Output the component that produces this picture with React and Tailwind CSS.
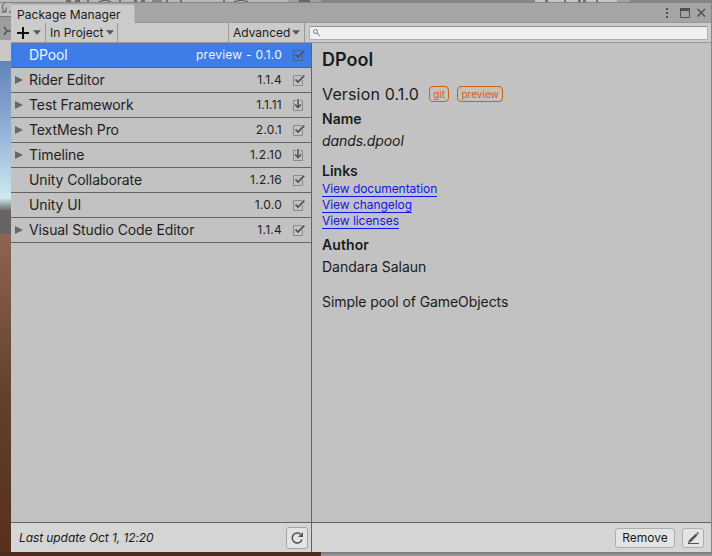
const packages = [
  { name: "DPool", version: "preview - 0.1.0", icon: "check", selected: true },
  { name: "Rider Editor", version: "1.1.4", icon: "check", arrow: true },
  { name: "Test Framework", version: "1.1.11", icon: "down", arrow: true },
  { name: "TextMesh Pro", version: "2.0.1", icon: "check", arrow: true },
  { name: "Timeline", version: "1.2.10", icon: "down", arrow: true },
  { name: "Unity Collaborate", version: "1.2.16", icon: "check" },
  { name: "Unity UI", version: "1.0.0", icon: "check" },
  { name: "Visual Studio Code Editor", version: "1.1.4", icon: "check", arrow: true },
];

function StatusIcon({ kind, selected }) {
  const box = selected ? "#4a5f8c" : "#8a8a8a";
  return (
    <svg className="mr-[6px] ml-[11px] h-3 w-3 shrink-0" viewBox="0 0 12 12" fill="none">
      {kind === "check" ? (
        <>
          <path d="M9 1.500H.5V11.500H9.500V6" stroke={box} />
          <path d="M2.500 5.500L5 8L11.300 1.600" stroke="#505050" strokeWidth="1.700" />
        </>
      ) : (
        <>
          <path d="M3 1.500H.5V11.500H9.500V1.500H7" stroke={box} />
          <path d="M5 0V8.500M2 5.500L5 8.500L8 5.500" stroke="#555" strokeWidth="1.600" />
        </>
      )}
    </svg>
  );
}

function Caret() {
  return (
    <svg className="h-[5px] w-2 shrink-0" viewBox="0 0 8 5">
      <path d="M0 .3H8L4 4.700Z" fill="#555" />
    </svg>
  );
}

function Row({ item }) {
  return (
    <div
      className={
        "flex h-[25px] shrink-0 items-center border-b border-[#636363] " +
        (item.selected ? "bg-[#3e7de7] text-[#eef3fc]" : "text-[#1f1f1f]")
      }
    >
      <div className="flex w-[18px] shrink-0 pl-1">
        {item.arrow && (
          <svg className="h-2 w-2" viewBox="0 0 8 8">
            <path d="M0 0L8 4L0 8Z" fill="#666" />
          </svg>
        )}
      </div>
      <span className="flex-1 text-[14px] tracking-[-0.1px]">{item.name}</span>
      <span className="text-[12px] tracking-[0.25px]">{item.version}</span>
      <StatusIcon kind={item.icon} selected={item.selected} />
    </div>
  );
}

function TopStrip() {
  return (
    <svg className="h-[3px] w-[712px] shrink-0" viewBox="0 0 712 3">
      <rect width="712" height="3" fill="#858585" />
      <rect width="288" height="2" fill="#b8b8b8" />
      <rect x="288" width="33" height="2" fill="#a0a0a0" />
      <rect x="535" width="82" height="2" fill="#c4c4c4" />
      <rect x="617" width="13" height="2" fill="#a2a2a2" />
      <rect x="152" width="10" height="2" fill="#888" />
      <path d="M66 1H71M75 1H80M134 1H137M141 1H145M180 1H182M88 0V2M120 0V2M167 0V2M224 0V2M565 0V2M597 0V2M545 1H548M578 1H581M583 1H586M299 1H310" stroke="#555" strokeWidth="1.500" />
      <path d="M99 1.500Q105 -1 111 1.500M234 1.500Q241 -1 248 1.500" stroke="#555" fill="none" />
    </svg>
  );
}

function LeftStrip() {
  return (
    <div className="flex w-[11px] shrink-0 flex-col">
      <div className="h-[13px] bg-[#bcbcbc]">
        <svg className="h-[13px] w-[11px]" viewBox="0 0 11 13" fill="none" stroke="#555">
          <path d="M8 -1C1 0 1 6 5 9M1.500 9H6V4.500M9 9H11" />
        </svg>
      </div>
      <div className="h-6 border-t border-[#777] bg-[#9d9d9d]">
        <svg className="h-[23px] w-[11px]" viewBox="0 0 11 23" fill="none" stroke="#555" strokeWidth="1.500">
          <path d="M4 10L7 14L4 18M7 14H11" />
        </svg>
      </div>
      <div className="h-[21px] bg-[#c8c8c8]" />
      <div className="h-[137px] bg-linear-to-b from-[#6284b8] via-[#91b0d6] to-[#cbeaf0]" />
      <div className="h-3 bg-linear-to-b from-[#cbeaf0] to-[#707070]" />
      <div className="h-[24px] bg-[#686464]" />
      <div className="flex-1 bg-linear-to-b from-[#8d6555] via-[#65402f] via-50% to-[#57301f]" />
    </div>
  );
}

export default function App() {
  return (
    <div className="flex h-[556px] w-[712px] flex-col overflow-hidden bg-[#858585] font-['Inter',sans-serif] leading-none whitespace-nowrap text-[#1b1b1b]">
      <TopStrip />
      <div className="flex h-[549px] shrink-0">
        <LeftStrip />
        <div className="flex w-[700px] flex-col bg-[#c2c2c2]">
          <div className="flex h-[20px] shrink-0 bg-[#a5a5a5]">
            <div className="mt-px flex h-[20px] w-[124px] items-center rounded-tr-[3px] border-t border-r border-[#b8b8b8] bg-[#cbcbcb] pt-px pl-[6px] text-[12px] tracking-[0.07px]">
              Package Manager
            </div>
            <div className="flex flex-1 items-center justify-end border-b border-[#999] pr-1">
              <svg className="h-3 w-[42px]" viewBox="0 0 42 12" fill="none" stroke="#505050">
                <path d="M2 1V3M2 5V7M2 9V11" strokeWidth="2" />
                <path d="M15.500 1.500H24.500V10.500H15.500Z" />
                <path d="M15 2.500H25" strokeWidth="3" />
                <path d="M32.500 2L40 9.500M40 2L32.500 9.500" strokeWidth="1.500" />
              </svg>
            </div>
          </div>
          <div className="flex h-[20px] shrink-0 border-b border-[#999] bg-[#cbcbcb] text-[12px]">
            <div className="flex w-[35px] items-center gap-1 border-r border-[#999] pl-[6px]">
              <svg className="h-3 w-3" viewBox="0 0 12 12">
                <path d="M6 0V12M0 6H12" stroke="#111" strokeWidth="2" />
              </svg>
              <Caret />
            </div>
            <div className="flex w-[72px] items-center gap-[2px] border-r border-[#999] pl-1">
              In Project
              <Caret />
            </div>
            <div className="flex-1 border-r border-[#999]" />
            <div className="flex w-[76px] items-center gap-[2px] border-r border-[#999] pl-1">
              Advanced
              <Caret />
            </div>
            <div className="flex w-[406px] items-center pr-[3px] pl-1">
              <div className="flex h-[14px] flex-1 items-center rounded-[2px] border border-t-[#909090] border-r-[#b0b0b0] border-b-[#b0b0b0] border-l-[#b0b0b0] bg-[#f0f0f0] pl-[3px]">
                <svg className="h-[7px] w-[7px]" viewBox="0 0 7 7" fill="none" stroke="#777">
                  <circle cx="2.500" cy="2.500" r="2" />
                  <path d="M4 4L7 7" />
                </svg>
              </div>
            </div>
          </div>
          <div className="flex h-[479px] shrink-0">
            <div className="flex w-[301px] shrink-0 flex-col border-r border-[#636363]">
              {packages.map((item) => (
                <Row key={item.name} item={item} />
              ))}
            </div>
            <div className="flex flex-1 flex-col items-start pl-[10px]">
              <h1 className="mt-2 h-[18px] text-[18px] font-semibold">DPool</h1>
              <div className="mt-4 flex h-[18px] items-center text-[16px]">
                <span className="tracking-[0.15px]">Version 0.1.0</span>
                <span className="ml-[10px] flex h-4 w-5 items-center justify-center rounded-[4px] border border-[#d45f0c] text-[10px] text-[#d45f0c]">git</span>
                <span className="ml-2 flex h-4 w-[46px] items-center justify-center rounded-[4px] border border-[#d45f0c] text-[10px] text-[#d45f0c]">preview</span>
              </div>
              <h2 className="mt-[9px] text-[14px] font-semibold">Name</h2>
              <p className="mt-2 text-[14px] tracking-[-0.1px] italic">dands.dpool</p>
              <h2 className="mt-4 text-[14px] font-semibold">Links</h2>
              <div className="mt-[5px] flex flex-col items-start gap-[2px] text-[12px] tracking-[-0.05px] text-[#1414f0]">
                <a className="h-[14px] border-b border-[#1414f0]">View documentation</a>
                <a className="h-[14px] border-b border-[#1414f0]">View changelog</a>
                <a className="h-[14px] border-b border-[#1414f0]">View licenses</a>
              </div>
              <h2 className="mt-[9px] text-[14px] font-semibold tracking-[0.1px]">Author</h2>
              <p className="mt-2 text-[14px]">Dandara Salaun</p>
              <p className="mt-[21px] text-[14px] tracking-[-0.08px]">Simple pool of GameObjects</p>
            </div>
          </div>
          <div className="flex h-[30px] shrink-0 border-t border-[#636363] bg-[#d5d5d5] text-[12px]">
            <div className="flex w-[301px] items-center justify-between border-r border-[#636363] pr-[3px] pl-2">
              <span className="tracking-[-0.09px] italic">Last update Oct 1, 12:20</span>
              <div className="flex h-[22px] w-[22px] items-center justify-center rounded-[3px] border border-[#a5a5a5] bg-[#e4e4e4]">
                <svg className="h-[14px] w-[14px]" viewBox="0 0 14 14" fill="none">
                  <path d="M10.500 3.200A5 5 0 1 0 12 8.500" stroke="#555" strokeWidth="1.500" />
                  <path d="M13 1V6H8Z" fill="#555" />
                </svg>
              </div>
            </div>
            <div className="flex flex-1 items-center justify-end gap-[7px] pr-[7px]">
              <button className="h-5 w-[60px] rounded-[3px] border border-[#adadad] bg-[#e4e4e4]">Remove</button>
              <div className="flex h-5 w-[22px] items-center justify-center rounded-[3px] border border-[#adadad] bg-[#e4e4e4]">
                <svg className="h-3 w-3" viewBox="0 0 12 12">
                  <path d="M1 11.500H12" stroke="#555" />
                  <path d="M.5 11.500L2.500 7.500L9 1.500L10.700 3L4.500 9.500Z" fill="#555" />
                  <path d="M9.500 1L10.500 0L12 1.200L11 2.400Z" fill="#555" />
                </svg>
              </div>
            </div>
          </div>
        </div>
      </div>
      <div className="flex flex-1">
        <div className="w-[321px] bg-[#4e2c1e]" />
        <div className="flex-1 bg-linear-to-b from-[#777] to-[#a0a0a0]" />
      </div>
    </div>
  );
}
